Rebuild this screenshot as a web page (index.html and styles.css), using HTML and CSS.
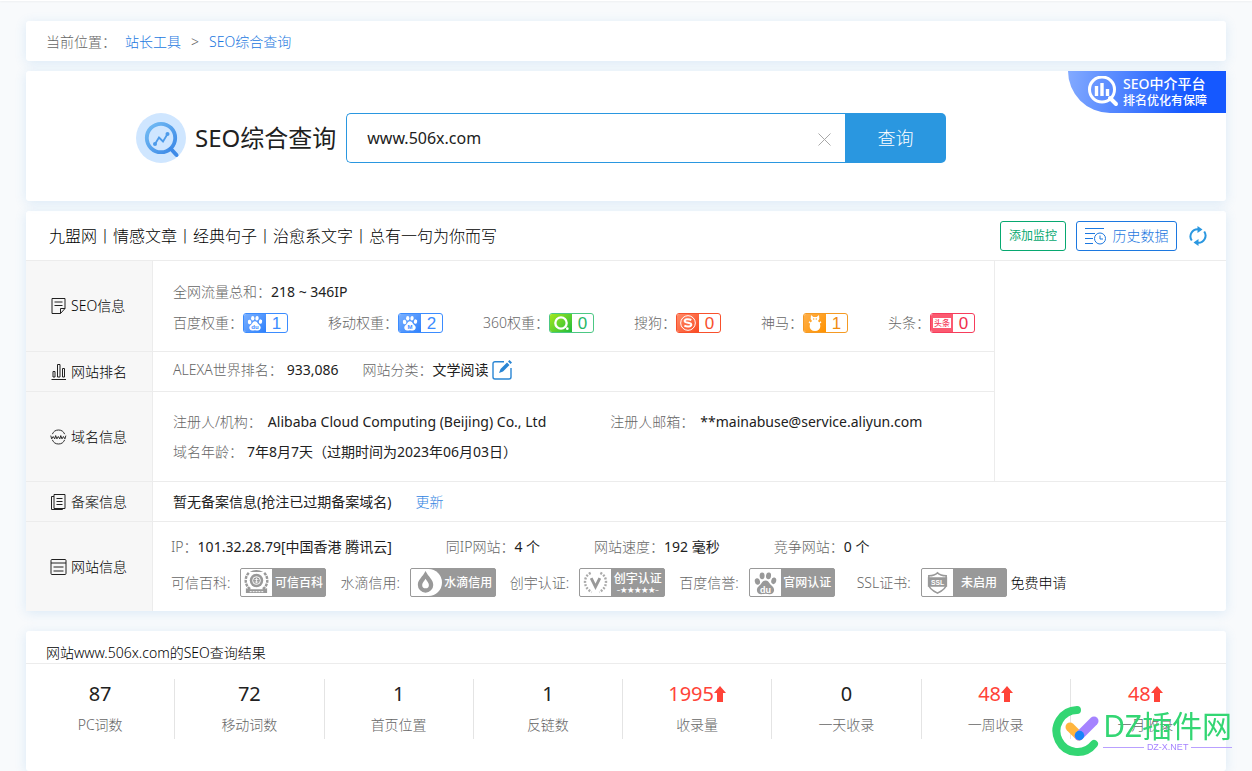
FILE: index.html
```html
<!DOCTYPE html>
<html lang="zh-CN">
<head>
<meta charset="utf-8">
<title>SEO综合查询</title>
<link rel="stylesheet" href="styles.css">
</head>
<body>
<svg class="defs" width="0" height="0" aria-hidden="true">
  <defs>
    <symbol id="paw" viewBox="0 0 24 24">
      <ellipse cx="3.800" cy="10.500" rx="2.600" ry="3.300" transform="rotate(-12 4 10)"/>
      <ellipse cx="8.600" cy="4.800" rx="2.500" ry="3.400"/>
      <ellipse cx="15" cy="4.800" rx="2.500" ry="3.400" transform="rotate(8 15 5)"/>
      <ellipse cx="20.200" cy="9.800" rx="2.500" ry="3.300" transform="rotate(12 20 10)"/>
      <path d="M12 9.500c2.400 0 3.300 1.800 4.600 3.500 1.500 1.900 4.200 3.200 4 6.300-.2 2.600-2.200 4-4.600 3.900-1.500 0-2.600-.5-4-.5s-2.600.5-4.100.5c-2.400.1-4.400-1.300-4.500-3.900-.1-3.100 2.500-4.400 4-6.300C8.700 11.300 9.700 9.500 12 9.500z"/>
    </symbol>
  </defs>
</svg>
<div class="topline"></div>
<main class="page">
  <nav class="card crumbs">
    <span>当前位置：</span>
    <a href="#">站长工具</a>
    <span class="sep">&gt;</span>
    <a href="#">SEO综合查询</a>
  </nav>

  <section class="card search">
    <svg class="logo" viewBox="0 0 50 50">
      <defs><linearGradient id="lg" x1="0" y1="0" x2="1" y2="1"><stop offset="0" stop-color="#74bdf4"/><stop offset="1" stop-color="#3a87e6"/></linearGradient></defs>
      <circle cx="25" cy="25" r="25" fill="#cfe6ff"/>
      <circle cx="25" cy="25" r="14.200" fill="none" stroke="url(#lg)" stroke-width="3.800"/>
      <path d="M35 36l5.500 6" stroke="#3f8be8" stroke-width="4" stroke-linecap="round"/>
      <path d="M19 31l4-6.500 4 4 4.500-7.500" fill="none" stroke="#4d9bea" stroke-width="1.800"/>
      <circle cx="19" cy="31" r="2" fill="#4d9bea"/><circle cx="31.500" cy="21" r="2" fill="#4d9bea"/>
    </svg>
    <h1>SEO综合查询</h1>
    <form class="query">
      <div class="field">
        <input type="text" value="www.506x.com" aria-label="域名">
        <button type="button" class="clear" aria-label="清除"><svg viewBox="0 0 13 13"><path d="M.5.5l12 12M12.500.5l-12 12"/></svg></button>
      </div>
      <button type="submit" class="go">查询</button>
    </form>
    <a href="#" class="ribbon">
      <svg viewBox="0 0 32 32"><circle cx="15" cy="13.500" r="12.500" fill="none" stroke="#fff" stroke-width="3"/><path d="M23 22l6 6" stroke="#fff" stroke-width="4" stroke-linecap="round"/><path d="M9.500 10v10M15 7v13M20.500 13v7" stroke="#fff" stroke-width="3.400"/></svg>
      <span><b>SEO中介平台</b><small>排名优化有保障</small></span>
    </a>
  </section>

  <section class="card info">
    <header class="info-head">
      <h2>九盟网丨情感文章丨经典句子丨治愈系文字丨总有一句为你而写</h2>
      <button type="button" class="btn green">添加监控</button>
      <button type="button" class="btn blue">
        <svg viewBox="0 0 22 18"><path d="M0 1.500h19M0 6.500h10M0 11.500h8M0 16.500h8"/><circle cx="15" cy="11.500" r="5.500"/><path d="M15 8.500v3.500h3"/></svg>历史数据</button>
      <button type="button" class="refresh" aria-label="刷新"><svg viewBox="0 0 18 20"><path d="M2.800 14.500a7.200 7.200 0 0 1 6.600-11.300M15.200 5.500a7.200 7.200 0 0 1-6.600 11.300" fill="none" stroke="#2a97e0" stroke-width="2"/><path d="M8.500 0l5 3.500-5 3.500zM9.500 13l-5 3.500 5 3.500z" fill="#2a97e0"/></svg></button>
    </header>
    <table class="facts">
      <tbody>
      <tr class="tall first">
        <th scope="row"><div class="side"><svg viewBox="0 0 16 16"><path d="M1.500.5h13v10l-4.500 5H1.500zM14.500 10.500H10v5M4 4h8M4 7.500h8"/></svg>SEO信息</div></th>
        <td class="lowered">
          <div class="line traffic"><span>全网流量总和：<em>218 ~ 346IP</em></span></div>
          <div class="line weights">
            <span>百度权重：<a href="#" class="rank baidu"><svg viewBox="0 0 24 24"><use href="#paw"/><text x="12" y="21" class="du">du</text></svg><b>1</b></a></span>
            <span>移动权重：<a href="#" class="rank baidu"><svg viewBox="0 0 24 24"><use href="#paw"/><text x="12" y="21.500" class="du">M</text></svg><b>2</b></a></span>
            <span>360权重：<a href="#" class="rank so"><svg viewBox="0 0 24 24"><circle cx="12" cy="12" r="8.500" fill="none" stroke="#fff" stroke-width="3.500"/><circle cx="21.500" cy="20.500" r="2"/></svg><b>0</b></a></span>
            <span>搜狗：<a href="#" class="rank sogou"><svg viewBox="0 0 24 24"><circle cx="12" cy="12" r="11" fill="none" stroke="#fff" stroke-width="1.500"/><path d="M17 7.500c-4-2-10-1.500-10 1.500 0 3.500 10 2 10 5.500 0 3-6.500 3.500-10.500 1.500" fill="none" stroke="#fff" stroke-width="3"/></svg><b>0</b></a></span>
            <span>神马：<a href="#" class="rank shenma"><svg viewBox="0 0 24 24"><path d="M6 0l3.500 3h5L18 0l.5 6-2 3c5 4 5.500 15-4.500 15S2.500 13 7.500 9l-2-3z"/><path d="M7 14l-4-4M17 14l4-4" stroke="#fff" stroke-width="2"/><path d="M9 6h2M13 6h2" stroke="#ff9c13" stroke-width="1.800"/></svg><b>1</b></a></span>
            <span>头条：<a href="#" class="rank toutiao"><i>头条</i><b>0</b></a></span>
          </div>
        </td>
        <td rowspan="3" class="empty"></td>
      </tr>
      <tr class="low">
        <th scope="row"><div class="side"><svg viewBox="0 0 16 16"><path d="M1 15.500h14.500M2.500 13V7.500h2V13zM7 13V.5h2.500V13zM12 13V4.500h2V13z"/></svg>网站排名</div></th>
        <td class="raised"><div class="line alexa"><span>ALEXA世界排名：<em class="spaced">933,086</em></span><span>网站分类：<em>文学阅读</em><button type="button" class="edit" aria-label="编辑"><svg viewBox="0 0 20 20"><path d="M12 1.700H3a2 2 0 0 0-2 2V17a2 2 0 0 0 2 2h14a2 2 0 0 0 2-2V8" fill="none" stroke="#2a86d4" stroke-width="1.400"/><path d="M7 13l1.500-4 6.500-6.500 2.500 2.500L11 11.500zM16 1.500L17.500 0 20 2.500 18.500 4z" fill="#2a86d4"/></svg></button></span></div></td>
      </tr>
      <tr class="tall">
        <th scope="row"><div class="side"><svg viewBox="0 0 18 16"><path d="M2.500 5a7 7 0 0 1 13 0M2.500 11a7 7 0 0 0 13 0M.8 6.500l1 3.500 1.600-2.500L5 10l1-3.500L7.300 10l1.500-2.500L10.400 10l1-3.500 1.300 3.500 1.500-2.500L15.800 10l1-3.500"/></svg>域名信息</div></th>
        <td>
          <div class="line owner"><span>注册人/机构：<em>Alibaba Cloud Computing (Beijing) Co., Ltd</em></span><span>注册人邮箱：<em>**mainabuse@service.aliyun.com</em></span></div>
          <div class="line"><span>域名年龄：<em class="spaced">7年8月7天（过期时间为2023年06月03日）</em></span></div>
        </td>
      </tr>
      <tr class="low">
        <th scope="row"><div class="side"><svg viewBox="0 0 16 16"><path d="M3.500.5h11v14h-11zM3.500 2.500H1v13h11v-1M6 4.500h6M6 7.500h6M6 10.500h6"/></svg>备案信息</div></th>
        <td colspan="2"><div class="line icp"><em>暂无备案信息(抢注已过期备案域名)</em><a href="#">更新</a></div></td>
      </tr>
      <tr class="tall last">
        <th scope="row"><div class="side"><svg viewBox="0 0 16 16"><rect x=".5" y=".5" width="15" height="15" rx="1"/><path d="M.5 4h15M3 8h10M3 12h10"/></svg>网站信息</div></th>
        <td colspan="2" class="raised">
          <div class="line site"><span>IP：<em>101.32.28.79[中国香港 腾讯云]</em></span><span>同IP网站：<em>4 个</em></span><span>网站速度：<em>192 毫秒</em></span><span>竞争网站：<em>0 个</em></span></div>
          <div class="line certs">
            <span>可信百科:<a href="#" class="cert"><svg viewBox="0 0 28 28"><circle cx="14" cy="12" r="7" fill="#999"/><circle cx="14" cy="12" r="4" fill="none" stroke="#fff"/><path d="M12 11h4M12 13.500h4M14 9v6" stroke="#fff" stroke-width=".8"/><path d="M6 4C1 9 2 18 8 21M22 4c5 5 4 14-2 17" fill="none" stroke="#999" stroke-width="2.500" stroke-dasharray="3 1"/><path d="M7 3q7-4 14 0M3 20l5 1h12l5-1v5H3z" fill="#999"/><path d="M7 23.500h14" stroke="#fff" stroke-dasharray="2 1"/></svg><b>可信百科</b></a></span>
            <span>水滴信用:<a href="#" class="cert round"><svg viewBox="0 0 28 28"><path d="M13 2c3 6 8 9 8 14.500a8 8 0 0 1-16 0C5 11 10 8 13 2z" fill="#999"/><path d="M13 10c1.500 3 3.500 4 3.500 6.500a3.500 3.500 0 0 1-7 0c0-2.500 2-3.500 3.500-6.500z" fill="#fff"/></svg><b>水滴信用</b></a></span>
            <span>创宇认证:<a href="#" class="cert"><svg viewBox="0 0 28 28"><path d="M9.500 9.500l4.500 9 4.500-9" fill="none" stroke="#999" stroke-width="3"/><path d="M9 4C1 8 1 19 10 24M19 4c8 4 8 15-1 20" fill="none" stroke="#aaa" stroke-width="2.500" stroke-dasharray="2 1.500"/></svg><b class="two">创宇认证<small>–★★★★★–</small></b></a></span>
            <span>百度信誉:<a href="#" class="cert paw"><svg viewBox="-1.500 -2 27 27"><use href="#paw" width="24" height="24"/><text x="12" y="22" class="du">du</text></svg><b>官网认证</b></a></span>
            <span class="ssl">SSL证书:<a href="#" class="cert"><svg viewBox="0 0 28 28"><path d="M5 7c4 0 7-1 9-3 2 2 5 3 9 3v9c0 4-5 7-9 9-4-2-9-5-9-9z" fill="none" stroke="#999" stroke-width="1.600"/><path d="M4 8.500h20v10H4z" fill="#999"/><text x="14" y="16.500" class="ssl-t">SSL</text></svg><b>未启用</b></a><a href="#" class="apply">免费申请</a></span>
          </div>
        </td>
      </tr>
      </tbody>
    </table>
  </section>

  <section class="card result">
    <h2>网站www.506x.com的SEO查询结果</h2>
    <ul class="stats">
      <li><b>87</b><span>PC词数</span></li>
      <li><b>72</b><span>移动词数</span></li>
      <li><b>1</b><span>首页位置</span></li>
      <li><b>1</b><span>反链数</span></li>
      <li class="up"><b>1995<svg viewBox="0 0 12 16"><path d="M6 0l6 7H9v9H3V7H0z"/></svg></b><span>收录量</span></li>
      <li><b>0</b><span>一天收录</span></li>
      <li class="up"><b>48<svg viewBox="0 0 12 16"><path d="M6 0l6 7H9v9H3V7H0z"/></svg></b><span>一周收录</span></li>
      <li class="up"><b>48<svg viewBox="0 0 12 16"><path d="M6 0l6 7H9v9H3V7H0z"/></svg></b><span>一月收录</span></li>
    </ul>
  </section>
</main>
<aside class="mark">
  <svg viewBox="0 0 50 52"><path d="M25 5A21 21 0 1 0 42 39" fill="none" stroke="#33d673" stroke-width="8" stroke-linecap="round"/><path d="M18 22l9 9" stroke="#ffb53e" stroke-width="9" stroke-linecap="round"/><path d="M27 31l15-15" stroke="#a583ff" stroke-width="9" stroke-linecap="round"/><circle cx="27.500" cy="30.500" r="4.700" fill="#1684f8"/></svg>
  <div><strong>DZ插件网</strong><span>DZ-X.NET</span></div>
</aside>
</body>
</html>
```
FILE: styles.css
```css
* { box-sizing: border-box; }
body {
  margin: 0;
  min-height: 100vh;
  background: #f8fafc;
  color: #212121;
  font: 400 14px/20px "Noto Sans", "Noto Sans CJK SC", sans-serif;
}
h1, h2, ul { margin: 0; padding: 0; font-weight: inherit; }
em, i { font-style: normal; }
a { color: #2f84e2; text-decoration: none; font-weight: 300; }
button, input { font: inherit; color: inherit; }
button { cursor: pointer; padding: 0; border: 0; background: none; }
.defs { position: absolute; }
.topline { height: 1px; background: #fff; box-shadow: 0 1px 2px rgba(0, 0, 0, .06); }
.page { padding: 20px 26px 0; }
.card { background: #fff; border-radius: 3px; box-shadow: 0 2px 12px rgba(70, 150, 220, .16); }

.crumbs { display: flex; align-items: center; height: 40px; padding: 2px 20px 0; margin-bottom: 10px; color: #666; font-weight: 300; }
.crumbs a { color: #1c78e0; }
.crumbs a:first-of-type { margin-left: 9px; }
.crumbs .sep { margin: 0 10px; }

.search { position: relative; display: flex; align-items: center; padding: 42px 280px 38px 110px; margin-bottom: 10px; }
.logo { width: 50px; height: 50px; flex: none; margin-right: 9px; }
.search h1 { font-size: 24px; line-height: 32px; white-space: nowrap; margin-right: 10px; }
.query { display: flex; flex: 1; height: 50px; }
.field { flex: 1; position: relative; }
.field input { width: 100%; height: 50px; padding: 0 44px 0 20px; border: 1px solid #2a97e0; border-right: 0; border-radius: 5px 0 0 5px; font-size: 16px; outline: 0; background: #fff; }
.clear { position: absolute; right: 14px; top: 20px; width: 13px; height: 13px; }
.clear svg { display: block; stroke: #a8a8a8; fill: none; }
.go { width: 101px; border-radius: 0 5px 5px 0; background: #2a97e0; color: #fff; font-size: 18px; font-weight: 300; }
.ribbon { position: absolute; right: 0; top: 0; display: flex; align-items: center; gap: 4px; width: 158px; height: 42px; padding-left: 19px; color: #fff; background: linear-gradient(100deg, #83aaff, #1558ff 75%); border-radius: 0 0 0 42px; white-space: nowrap; }
.ribbon svg { width: 32px; height: 32px; }
.ribbon b { display: block; font-size: 14px; line-height: 18px; font-weight: 500; }
.ribbon small { display: block; font-size: 12px; line-height: 16px; font-weight: 500; }

.info { margin-bottom: 20px; }
.info-head { display: flex; align-items: center; height: 50px; padding: 0 19px 0 23px; border-bottom: 1px solid #ececec; }
.info-head h2 { flex: 1; font-size: 16px; line-height: 24px; font-weight: 300; color: #000; }
.btn { height: 30px; border: 1px solid; border-radius: 3px; margin-right: 10px; display: flex; align-items: center; justify-content: center; }
.btn.green { width: 66px; font-size: 12px; color: #07a870; }
.btn.blue { width: 101px; color: #1c78e0; gap: 6px; font-size: 14px; font-weight: 300; }
.btn svg { width: 22px; height: 18px; fill: none; stroke: currentColor; stroke-width: 1; }
.refresh { width: 18px; height: 20px; margin-left: 2px; }
.refresh svg { display: block; }

.facts { width: 100%; border-collapse: separate; border-spacing: 0; table-layout: fixed; }
.facts th, .facts td { padding: 0 0 0 20px; border-bottom: 1px solid #ececec; text-align: left; font-weight: inherit; vertical-align: middle; white-space: nowrap; }
.facts th { width: 127px; padding-left: 24px; background: #f7f7f7; border-right: 1px solid #ececec; }
.facts .empty { width: 232px; border-left: 1px solid #ececec; }
.tall { height: 90px; }
.low { height: 40px; }
.tall.first { height: 91px; }
.tall.last { height: 89px; }
.facts .last th, .facts .last td { border-bottom: 0; }
.facts .last td { padding-left: 18px; }
.facts .raised { padding-bottom: 4px; }
.facts .lowered { padding-top: 4px; }
.side { display: flex; align-items: center; gap: 4px; font-weight: 300; color: #000; }
.side svg { width: 17px; height: 16px; flex: none; fill: none; stroke: #212121; }
.line { display: flex; align-items: center; height: 30px; color: #666; font-weight: 300; }
.line > span { display: flex; align-items: center; }
.line em { color: #212121; font-weight: 400; }
.line .spaced { margin-left: 4px; }
.weights { gap: 40px; height: 32px; }
.alexa { gap: 24px; height: 28px; }
.edit { width: 20px; height: 20px; margin-left: 4px; }
.edit svg { display: block; }
.owner { gap: 64px; }
.owner em { margin-left: 6px; }
.icp { gap: 24px; }
.site { gap: 54px; height: 36px; }
.certs { gap: 14px; height: 36px; }
.certs .ssl { margin-left: 8px; }
.apply { color: #000; margin-left: 4px; }

.rank { display: flex; width: 45px; height: 20px; border: 1px solid #3b8cff; border-radius: 3px; overflow: hidden; background: #fff; color: #3b8cff; }
.rank svg, .rank i { width: 22px; height: 18px; padding: 1px 3px; fill: #fff; background: linear-gradient(135deg, #7ab0ff, #2f80fb); }
.rank b { flex: 1; text-align: center; font: 500 17px/19px "Liberation Sans", Arial, sans-serif; }
.rank.so { border-color: #4cc884; color: #28b864; }
.rank.so svg { background: linear-gradient(135deg, #a4e81c, #20bc3c); }
.rank.sogou { border-color: #f8502c; color: #f8502c; }
.rank.sogou svg { background: linear-gradient(135deg, #ff8b68, #fa4a22); }
.rank.shenma { border-color: #f59a23; color: #f08c10; }
.rank.shenma svg { background: linear-gradient(135deg, #ffb04a, #ff9200); }
.rank.toutiao { border-color: #f63d5c; color: #f0304e; }
.rank.toutiao i { display: grid; place-items: center; padding: 0; border: 3px solid #fb5a70; border-width: 4px 2px; background: #fff; color: #f63d5c; font-size: 8px; line-height: 10px; font-weight: 500; }
.du { fill: #3b8cff; font: 700 9px "Liberation Sans", sans-serif; text-anchor: middle; }

.cert { display: flex; width: 86px; height: 29px; margin-left: 10px; border: 1px solid #999; border-radius: 2px; background: #999; color: #fff; overflow: hidden; }
.cert svg { width: 31px; height: 27px; flex: none; background: #fff; fill: #999; }
.cert.round svg { border-radius: 0 14px 14px 0; }
.cert .du { fill: #fff; }
.ssl-t { fill: #fff; font: 700 7px "Liberation Sans", sans-serif; text-anchor: middle; }
.cert b { flex: 1; text-align: center; font-size: 12px; line-height: 27px; font-weight: 500; }
.cert .two { line-height: 14px; padding-top: 3px; }
.two small { display: block; font-size: 7px; line-height: 8px; }

.result { min-height: 140px; }
.result h2 { height: 33px; padding: 12px 20px 0; font-size: 14px; line-height: 20px; font-weight: 300; color: #000; border-bottom: 1px solid #ececec; }
.stats { display: grid; grid-template-columns: repeat(8, 1fr); padding: 15px 6px 0 0; list-style: none; }
.stats li { height: 60px; text-align: center; color: #666; border-right: 1px solid #e4e4e4; font-weight: 300; }
.stats li:last-child { border: 0; }
.stats b { display: flex; align-items: center; justify-content: center; height: 30px; font-size: 20px; font-weight: 400; color: #212121; }
.stats span { display: block; line-height: 20px; padding-top: 6px; }
.stats .up b { color: #ff4338; }
.stats b svg { width: 12px; height: 16px; fill: #ff4338; }

.mark { position: fixed; right: 20px; bottom: 14px; display: flex; align-items: center; gap: 1px; white-space: nowrap; }
.mark > svg { width: 50px; height: 52px; }
.mark strong { display: block; font-size: 30px; line-height: 32px; font-weight: 400; color: #33d673; }
.mark span { display: flex; align-items: center; gap: 3px; font: 9px/10px "Liberation Sans", sans-serif; color: #a583ff; }
.mark span::before, .mark span::after { content: ""; flex: 1; height: 1px; background: #b9a0ff; }
```
